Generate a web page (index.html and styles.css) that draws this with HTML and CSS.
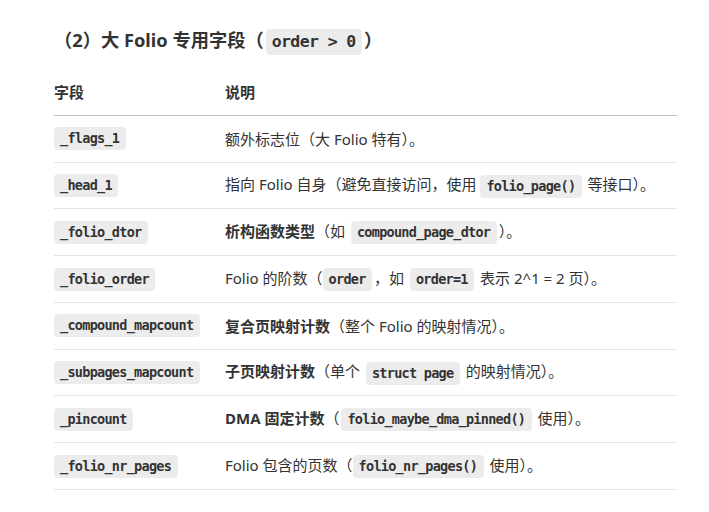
FILE: index.html
```html
<!DOCTYPE html>
<html lang="zh-CN">
<head>
<meta charset="utf-8">
<link rel="stylesheet" href="styles.css">
</head>
<body>
<main class="doc">
  <h3 class="title">（2）大 Folio 专用字段（<code class="chip chip-lg">order &gt; 0</code>）</h3>
  <table class="fields">
    <colgroup><col class="c1"><col class="c2"></colgroup>
    <thead>
      <tr><th>字段</th><th>说明</th></tr>
    </thead>
    <tbody>
      <tr><td><code class="chip">_flags_1</code></td><td>额外标志位（大 Folio 特有）。</td></tr>
      <tr><td><code class="chip">_head_1</code></td><td>指向 Folio 自身（避免直接访问，使用 <code class="chip">folio_page()</code> 等接口）。</td></tr>
      <tr><td><code class="chip">_folio_dtor</code></td><td><strong>析构函数类型</strong>（如 <code class="chip">compound_page_dtor</code>）。</td></tr>
      <tr><td><code class="chip">_folio_order</code></td><td>Folio 的阶数（<code class="chip">order</code>，如 <code class="chip">order=1</code> 表示 2^1 = 2 页）。</td></tr>
      <tr><td><code class="chip">_compound_mapcount</code></td><td><strong>复合页映射计数</strong>（整个 Folio 的映射情况）。</td></tr>
      <tr><td><code class="chip">_subpages_mapcount</code></td><td><strong>子页映射计数</strong>（单个 <code class="chip">struct page</code> 的映射情况）。</td></tr>
      <tr><td><code class="chip">_pincount</code></td><td><strong>DMA 固定计数</strong>（<code class="chip">folio_maybe_dma_pinned()</code> 使用）。</td></tr>
      <tr><td><code class="chip">_folio_nr_pages</code></td><td>Folio 包含的页数（<code class="chip">folio_nr_pages()</code> 使用）。</td></tr>
    </tbody>
  </table>
</main>
</body>
</html>
```
FILE: styles.css
```css
html, body {
  margin: 0;
  padding: 0;
  background: #ffffff;
}
body {
  font-family: "Noto Sans", "Noto Sans CJK SC", sans-serif;
  color: #333333;
  font-size: 15px;
}
.doc {
  padding: 25px 32px 0 54px;
}
.title {
  margin: 0;
  font-size: 18.25px;
  font-weight: 700;
  line-height: 30px;
  color: #333333;
}
.chip {
  display: inline-block;
  font-family: "DejaVu Sans Mono", monospace;
  font-weight: 700;
  font-size: 13.5px;
  letter-spacing: -0.72px;
  line-height: 17px;
  background: #ececec;
  color: #333333;
  border-radius: 4px;
  padding: 3px 6.4px 3px 6px;
  margin: 0 2px;
  vertical-align: middle;
}
td > .chip:first-child {
  margin-left: 0;
}
.chip-lg {
  font-size: 16.5px;
  letter-spacing: -0.6px;
  line-height: 20px;
}
.fields {
  width: 100%;
  border-collapse: collapse;
  margin-top: 14px;
}
.c1 { width: 171px; }
.fields th {
  text-align: left;
  font-weight: 700;
  padding: 0;
  height: 45.75px;
  vertical-align: middle;
  border-bottom: 1px solid #bcbcbc;
}
.fields td {
  padding: 0;
  height: 45.75px;
  vertical-align: middle;
  border-bottom: 1px solid #e4e4e4;
}
strong { font-weight: 700; }
```
